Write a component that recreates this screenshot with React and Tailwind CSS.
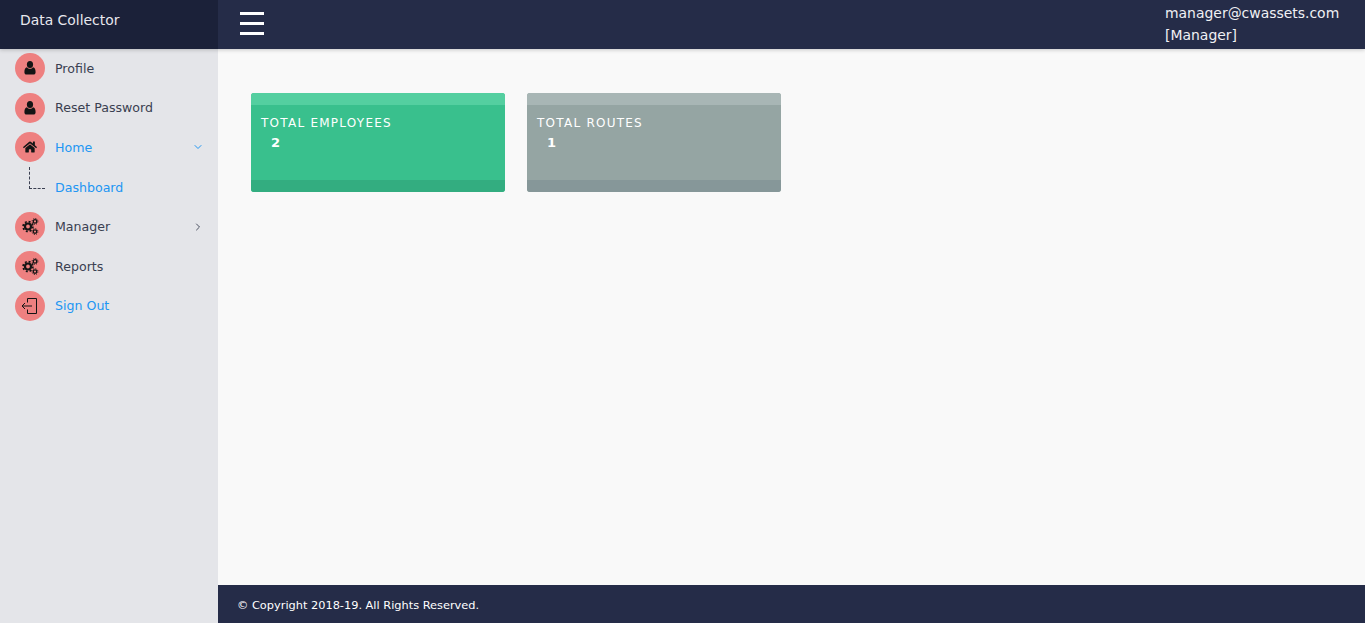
import React from "react";
import { FaHome } from "react-icons/fa";
import { ChevronDown, ChevronRight } from "lucide-react";

const font = "font-['DejaVu_Sans',Verdana,sans-serif]";

function UserIcon() {
  return (
    <svg width="12" height="14" viewBox="0 0 12 14" fill="#141414">
      <ellipse cx="6" cy="3.6" rx="3.1" ry="3.5" />
      <path d="M3 6.2C3.8 7.3 4.8 7.8 6 7.8C7.2 7.8 8.2 7.3 9 6.2C10.8 6.5 11.6 8.2 11.6 11.2C11.6 12.8 10.7 13.6 9.4 13.6H2.6C1.3 13.6 0.4 12.8 0.4 11.2C0.4 8.2 1.2 6.5 3 6.2Z" />
    </svg>
  );
}

function GearsIcon() {
  return (
    <svg width="17" height="17" viewBox="0 0 17 17" fill="none" stroke="#141414">
      <circle cx="6" cy="8.5" r="3" strokeWidth="2.2" />
      <circle cx="6" cy="8.5" r="4.9" strokeWidth="1.7" strokeDasharray="2 1.85" />
      <circle cx="13" cy="3.4" r="1.7" strokeWidth="1.3" />
      <circle cx="13" cy="3.4" r="2.9" strokeWidth="1" strokeDasharray="1.1 1.18" />
      <circle cx="13" cy="13.6" r="1.7" strokeWidth="1.3" />
      <circle cx="13" cy="13.6" r="2.9" strokeWidth="1" strokeDasharray="1.1 1.18" />
    </svg>
  );
}

function SignOutIcon() {
  return (
    <svg width="20" height="20" viewBox="0 0 20 20" fill="none" stroke="#141414" strokeWidth="1">
      <path d="M7.5 6.5V2.5H16.5V17.5H7.5V13.5" />
      <path d="M2 10H12" />
      <path d="M5 7L2 10L5 13" />
    </svg>
  );
}

function Item({ icon, label, active, arrow }) {
  return (
    <div className="flex items-center h-[30px] pl-[15px] pr-[14px]">
      <span className="flex items-center justify-center w-[30px] h-[30px] rounded-full bg-[#ee8080] shrink-0">
        {icon}
      </span>
      <span className={`ml-[10px] pt-[1px] text-[12.6px] leading-[30px] flex-1 ${active ? "text-[#2196f3]" : "text-[#3a3f51]"}`}>
        {label}
      </span>
      {arrow === "down" && <ChevronDown size={12} strokeWidth={2} className="text-[#2196f3]" />}
      {arrow === "right" && <ChevronRight size={12} strokeWidth={1.8} className="text-[#3a3f51]" />}
    </div>
  );
}

function Card({ title, value, body, top, bottom }) {
  return (
    <div className={`w-[254px] h-[99px] rounded-[3px] overflow-hidden flex flex-col text-white ${body}`}>
      <div className={`h-3 ${top}`} />
      <div className="flex-1 pl-[10px] pt-[11px]">
        <div className="text-[12px] leading-[15px] tracking-[1.25px]">{title}</div>
        <div className="text-[13px] leading-[15px] font-bold pl-[10px] mt-[4px]">{value}</div>
      </div>
      <div className={`h-3 ${bottom}`} />
    </div>
  );
}

export default function App() {
  return (
    <div className={`h-[623px] w-[1365px] flex flex-col overflow-hidden bg-[#f9f9f9] ${font}`}>
      <header className="h-[49px] flex shrink-0 bg-[#252c48] text-white relative z-10 shadow-[0_1px_4px_rgba(0,0,0,0.2)]">
        <div className="w-[218px] pl-5 pt-[11px] bg-[#1b2139] text-[13.9px] leading-[18px] text-[#e8e8ee]">Data Collector</div>
        <div className="ml-[22px] mt-3 w-6 flex flex-col gap-[7px]">
          <span className="h-[3px] bg-white" />
          <span className="h-[3px] bg-white" />
          <span className="h-[3px] bg-white" />
        </div>
        <div className="ml-auto w-[200px] pt-[3px] text-[13.95px] leading-[21.5px] text-[#f0f0f4]">
          <div>manager@cwassets.com</div>
          <div>[Manager]</div>
        </div>
      </header>
      <div className="flex flex-1 min-h-0">
        <aside className="w-[218px] shrink-0 bg-[#e4e5e9] pt-[4.3px] flex flex-col gap-[9.6px]">
          <Item icon={<UserIcon />} label="Profile" />
          <Item icon={<UserIcon />} label="Reset Password" />
          <Item icon={<FaHome size={14} color="#141414" />} label="Home" active arrow="down" />
          <div className="flex h-[30px] pl-[29px]">
            <div className="-mt-[5px] w-4 h-[22px] border-l border-b border-dashed border-[#3a3f51]" />
            <span className="ml-[10px] pt-[1px] text-[12.6px] leading-[30px] text-[#2196f3]">Dashboard</span>
          </div>
          <Item icon={<GearsIcon />} label="Manager" arrow="right" />
          <Item icon={<GearsIcon />} label="Reports" />
          <Item icon={<SignOutIcon />} label="Sign Out" active />
        </aside>
        <main className="flex-1 flex flex-col min-w-0">
          <div className="flex-1 flex items-start gap-[22px] pl-[33px] pt-[44px]">
            <Card title="TOTAL EMPLOYEES" value="2" body="bg-[#39c08d]" top="bg-[#54cfa0]" bottom="bg-[#33ad80]" />
            <Card title="TOTAL ROUTES" value="1" body="bg-[#95a5a3]" top="bg-[#a8b6b5]" bottom="bg-[#869799]" />
          </div>
          <footer className="h-[38px] shrink-0 bg-[#252c48] pl-[19px] text-[11.35px] leading-[41px] text-white">
            © Copyright 2018-19. All Rights Reserved.
          </footer>
        </main>
      </div>
    </div>
  );
}
